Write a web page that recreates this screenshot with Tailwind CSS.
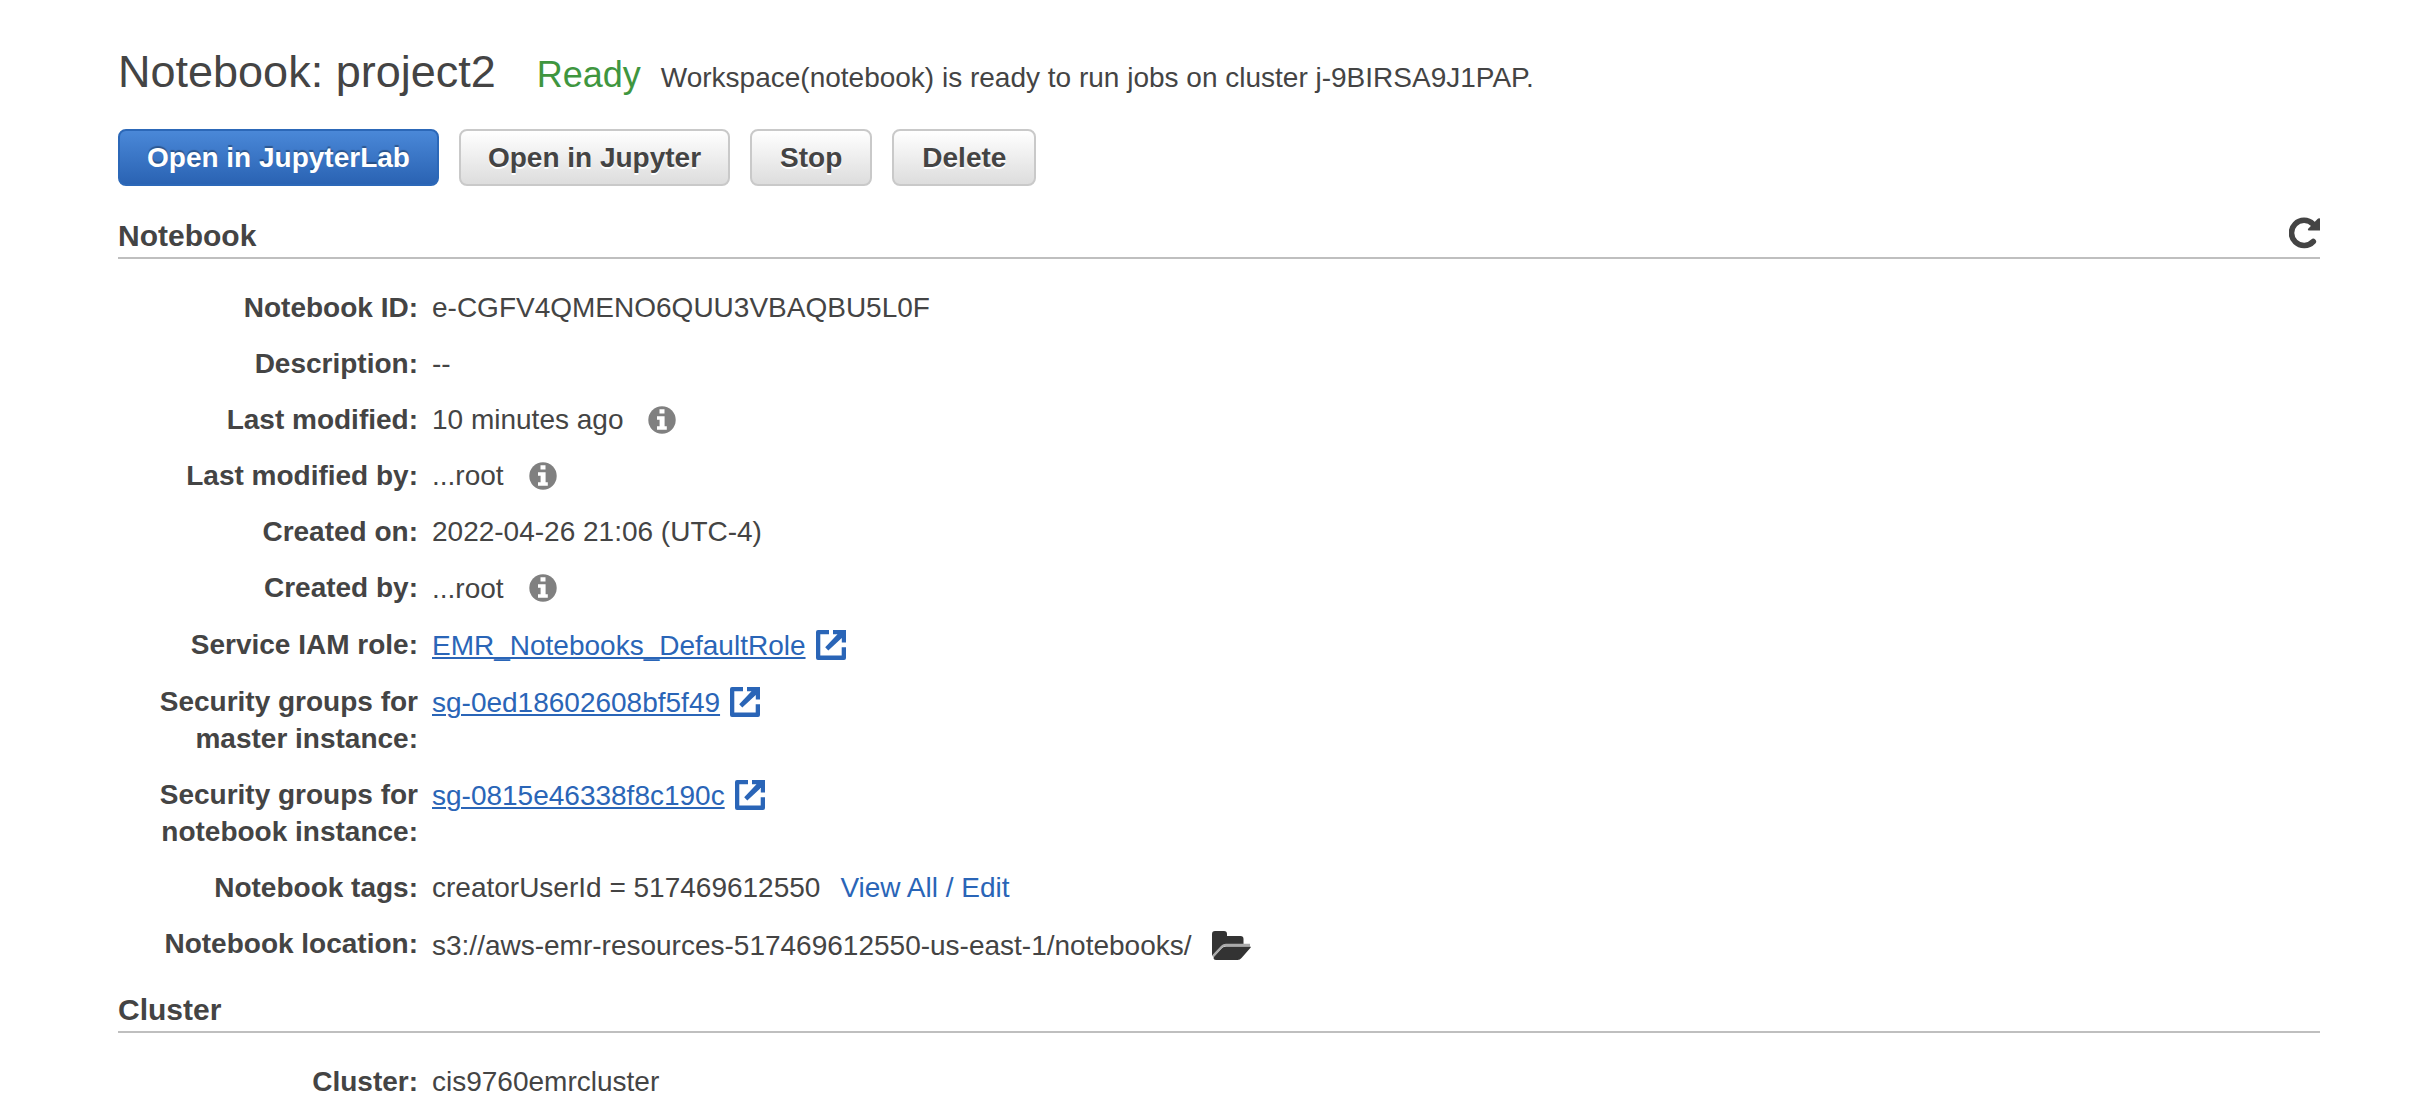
<!DOCTYPE html>
<html lang="en">
<head>
<meta charset="utf-8">
<title>Notebook: project2</title>
<script src="https://cdn.jsdelivr.net/npm/@tailwindcss/browser@4"></script>
</head>
<body class="bg-white font-['Liberation_Sans',Arial,sans-serif] text-[28px] leading-[37px] text-[#444]">
<svg class="hidden" aria-hidden="true">
  <symbol id="info" viewBox="0 0 28 28">
    <circle cx="14" cy="14" r="13.7" fill="#808080"/>
    <path d="M11.500 3.300h5v4.200h-5zM9 10.200h7.600v10h2.200v3.600H9v-3.600h2.600v-6.400H9z" fill="#fff"/>
  </symbol>
  <symbol id="external" viewBox="0 0 30 30">
    <path d="M13 0v4.300H4.300V25.500H25.700V17.300H30V28q0 2-2 2H2q-2 0-2-2V2q0-2 2-2zM17 0h13v12.500h-4.200V8L12.300 20.500l-3.100-3.200L21.500 4.300H17z" fill="#2a65b7"/>
  </symbol>
</svg>
<main class="pt-[44px] pr-[98px] pl-[118px]">
  <header class="flex items-baseline">
    <h1 class="text-[45px] leading-[56px]">Notebook: project2</h1>
    <p class="ml-[41px] text-[36px] text-[#3f963f]">Ready</p>
    <p class="ml-[20px]">Workspace(notebook) is ready to run jobs on cluster j-9BIRSA9J1PAP.</p>
  </header>

  <div class="mt-[29px] flex gap-5">
    <button type="button" class="h-[57px] rounded-lg border-2 border-[#2c68b8] bg-linear-to-b from-[#4a88d8] to-[#2a63b3] px-[27px] font-bold text-white text-shadow-[0_-2px_1px_rgb(0_0_0/0.3)]">Open in JupyterLab</button>
    <button type="button" class="h-[57px] rounded-lg border-2 border-[#c9c9c9] bg-linear-to-b from-white to-[#dddddd] px-[27px] font-bold text-shadow-[0_2px_0_#fff]">Open in Jupyter</button>
    <button type="button" class="h-[57px] rounded-lg border-2 border-[#c9c9c9] bg-linear-to-b from-white to-[#dddddd] px-7 font-bold text-shadow-[0_2px_0_#fff]">Stop</button>
    <button type="button" class="h-[57px] rounded-lg border-2 border-[#c9c9c9] bg-linear-to-b from-white to-[#dddddd] px-7 font-bold text-shadow-[0_2px_0_#fff]">Delete</button>
  </div>

  <section>
    <div class="mt-[31px] flex h-[42px] items-start justify-between border-b-2 border-[#bfbfbf]">
      <h2 class="text-[30px] font-bold">Notebook</h2>
      <button type="button" aria-label="Refresh">
        <svg class="block h-8 w-[31px]" viewBox="0 0 31 32">
          <path d="M24.300 24.500A12.600 12.600 0 1 1 24 7" fill="none" stroke="#444" stroke-width="5.600" stroke-linecap="round"/>
          <path d="M31 1.500V13.500H19.500q-1.200-.5-.3-1.700L28.500 2q1.200-1 2.500-.5z" fill="#444"/>
        </svg>
      </button>
    </div>
    <dl class="mt-[30px] grid grid-cols-[300px_1fr] gap-x-[14px] gap-y-[19px]">
      <dt class="text-right font-bold">Notebook ID:</dt>
      <dd>e-CGFV4QMENO6QUU3VBAQBU5L0F</dd>
      <dt class="text-right font-bold">Description:</dt>
      <dd>--</dd>
      <dt class="text-right font-bold">Last modified:</dt>
      <dd class="flex items-center gap-[25px]">10 minutes ago <svg class="size-7"><use href="#info"/></svg></dd>
      <dt class="text-right font-bold">Last modified by:</dt>
      <dd class="flex items-center gap-[25px]">...root <svg class="size-7"><use href="#info"/></svg></dd>
      <dt class="text-right font-bold">Created on:</dt>
      <dd>2022-04-26 21:06 (UTC-4)</dd>
      <dt class="text-right font-bold">Created by:</dt>
      <dd class="flex h-[38px] items-center gap-[25px]">...root <svg class="size-7"><use href="#info"/></svg></dd>
      <dt class="text-right font-bold">Service IAM role:</dt>
      <dd><a href="#" class="flex h-[38px] items-center gap-[10px] text-[#2a65b7]"><span class="underline decoration-2 underline-offset-2">EMR_Notebooks_DefaultRole</span><svg class="size-[30px]"><use href="#external"/></svg></a></dd>
      <dt class="text-right font-bold">Security groups for master instance:</dt>
      <dd><a href="#" class="flex h-[38px] items-center gap-[10px] text-[#2a65b7]"><span class="underline decoration-2 underline-offset-2">sg-0ed18602608bf5f49</span><svg class="size-[30px]"><use href="#external"/></svg></a></dd>
      <dt class="text-right font-bold">Security groups for notebook instance:</dt>
      <dd><a href="#" class="flex h-[38px] items-center gap-[10px] text-[#2a65b7]"><span class="underline decoration-2 underline-offset-2">sg-0815e46338f8c190c</span><svg class="size-[30px]"><use href="#external"/></svg></a></dd>
      <dt class="text-right font-bold">Notebook tags:</dt>
      <dd class="flex gap-5">creatorUserId = 517469612550 <a href="#" class="text-[#2a65b7]">View All / Edit</a></dd>
      <dt class="text-right font-bold">Notebook location:</dt>
      <dd class="flex h-10 items-center gap-5">s3://aws-emr-resources-517469612550-us-east-1/notebooks/
        <svg class="h-[30px] w-[39px]" viewBox="0 0 39 30">
          <path d="M0 26V4q0-3 3-3h9q3 0 3 3v2h13.500q3 0 3 3v6H14q-3 0-5 2z" fill="#333"/>
          <path d="M2 26.500 10 18q1.500-1.500 4-1.500h24q1.500 0 .5 1.300L29.500 28q-1.500 2-4 2H4q-3.500 0-2-3.500z" fill="#333"/>
          <path d="M.8 26.500 10 16.500q1.500-1.500 4-1.500h24" fill="none" stroke="#aaa" stroke-width="2.400"/>
        </svg>
      </dd>
    </dl>
  </section>

  <section>
    <h2 class="mt-[26px] h-[42px] border-b-2 border-[#bfbfbf] text-[30px] font-bold">Cluster</h2>
    <dl class="mt-[30px] grid grid-cols-[300px_1fr] gap-x-[14px] gap-y-[19px]">
      <dt class="text-right font-bold">Cluster:</dt>
      <dd>cis9760emrcluster</dd>
    </dl>
  </section>
</main>
</body>
</html>
